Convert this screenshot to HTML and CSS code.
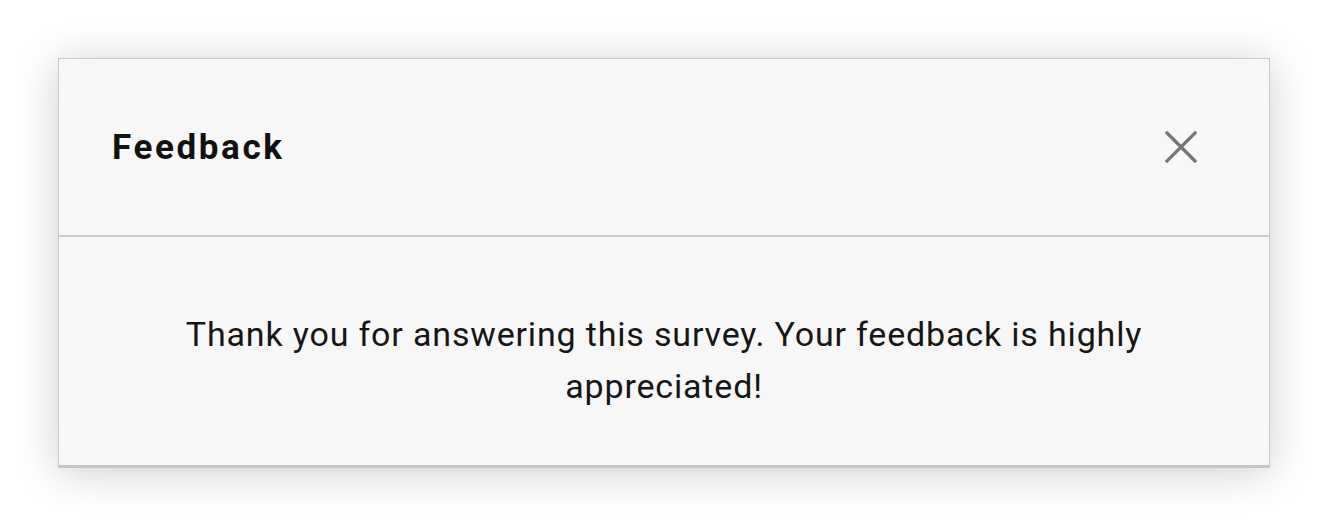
FILE: index.html
```html
<!DOCTYPE html>
<html>
<head>
<meta charset="utf-8">
<link rel="stylesheet" href="styles.css">
</head>
<body>
<div class="page">
  <div class="dialog">
    <div class="dialog-header">
      <h1 class="dialog-title">Feedback</h1>
      <button class="close-btn" aria-label="Close">
        <svg width="32" height="32" viewBox="0 0 32 32"><path d="M2 2 L30 30 M30 2 L2 30" stroke="#757575" stroke-width="3.2" stroke-linecap="square" fill="none"/></svg>
      </button>
    </div>
    <div class="dialog-body">
      <p class="message">Thank you for answering this survey. Your feedback is highly appreciated!</p>
    </div>
  </div>
</div>
</body>
</html>
```
FILE: styles.css
```css
html, body {
  margin: 0;
  padding: 0;
  background: #ffffff;
  font-family: Roboto, "Liberation Sans", sans-serif;
}
.page {
  padding: 58px 58px 60px 58px;
  width: 1212px;
}
.dialog {
  background: #f7f7f7;
  border: 1px solid #c9c9c9;
  border-bottom: 3px solid #c6c6c6;
  box-shadow: 0 4px 40px rgba(0, 0, 0, 0.2);
}
.dialog-header {
  height: 176px;
  display: flex;
  align-items: center;
  justify-content: space-between;
  padding: 0 72px 0 53px;
  border-bottom: 2px solid #cccccc;
}
.dialog-title {
  margin: 0;
  font-size: 35px;
  font-weight: 700;
  color: #111111;
  letter-spacing: 2.6px;
}
.close-btn {
  background: none;
  border: none;
  padding: 0;
  width: 32px;
  height: 32px;
  display: flex;
}
.dialog-body {
  padding: 71px 54px 53px;
}
.message {
  margin: 0;
  text-align: center;
  font-size: 34px;
  line-height: 52px;
  color: #161616;
  letter-spacing: 0.83px;
}
```
